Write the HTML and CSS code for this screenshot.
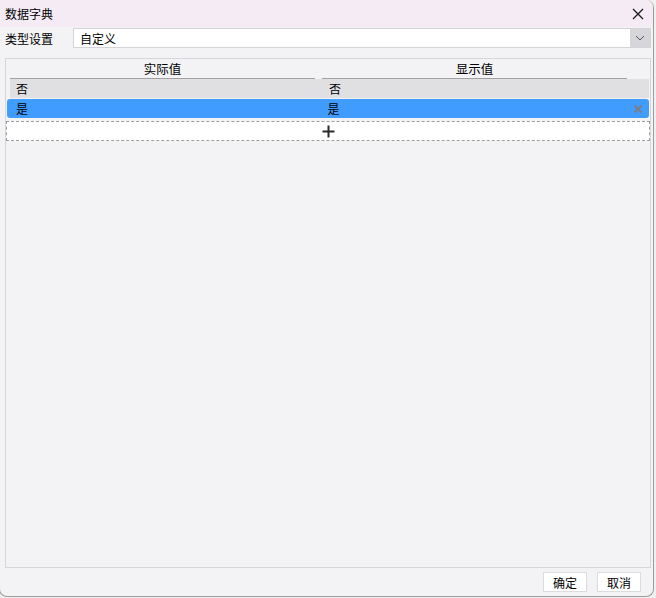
FILE: index.html
```html
<!DOCTYPE html>
<html>
<head>
  <meta charset="utf-8">
  <link rel="stylesheet" href="styles.css">
</head>
<body>
  <div class="window">
    <div class="titlebar">
      <span class="title">数据字典</span>
      <span class="close">
        <svg width="12" height="12" viewBox="0 0 12 12"><path d="M1 1L11 11M11 1L1 11" stroke="#1a1a1a" stroke-width="1.3"/></svg>
      </span>
    </div>

    <div class="type-row">
      <label>类型设置</label>
      <div class="select">
        <span class="select-value">自定义</span>
        <span class="select-btn">
          <svg width="10" height="6" viewBox="0 0 10 6"><path d="M1 1L5 5L9 1" fill="none" stroke="#555" stroke-width="1"/></svg>
        </span>
      </div>
    </div>

    <div class="panel">
      <div class="table-head">
        <div class="th">实际值</div>
        <div class="th">显示值</div>
      </div>
      <div class="row row-gray">
        <div class="td">否</div>
        <div class="td">否</div>
        <div class="td-del"></div>
      </div>
      <div class="row row-sel">
        <div class="td">是</div>
        <div class="td">是</div>
        <div class="td-del">
          <svg width="10" height="10" viewBox="0 0 10 10"><path d="M1.5 1.5L8.5 8.5M8.5 1.5L1.5 8.5" stroke="#7d7d85" stroke-width="2"/></svg>
        </div>
      </div>
      <div class="add-row">
        <svg width="13" height="13" viewBox="0 0 13 13"><path d="M6.5 0.5V12.5M0.5 6.5H12.5" stroke="#2b2b2b" stroke-width="2"/></svg>
      </div>
    </div>

    <div class="footer">
      <button class="btn">确定</button>
      <button class="btn">取消</button>
    </div>
  </div>
</body>
</html>
```

FILE: styles.css
```css
body {
  margin: 0;
  background: #f0f0f0;
  font-family: 'Noto Sans CJK SC', 'Noto Sans', sans-serif;
  font-size: 12px;
  color: #000;
}

.window {
  box-sizing: border-box;
  width: 655px;
  height: 597px;
  margin-left: -1px;
  background: #f3f3f5;
  border: 1px solid #9c9c9c;
  border-top: none;
  border-radius: 0 8px 8px 8px;
  display: flex;
  flex-direction: column;
  overflow: hidden;
}

.titlebar {
  height: 27px;
  background: #f5ebf5;
  display: flex;
  align-items: center;
  justify-content: space-between;
  padding: 0 9px 0 5px;
}

.close {
  display: flex;
  width: 12px;
  height: 12px;
}

.type-row {
  display: flex;
  align-items: center;
  height: 20px;
  margin-top: 1px;
  padding-left: 5px;
  padding-right: 2px;
}

.type-row label {
  width: 68px;
}

.select {
  flex: 1;
  height: 20px;
  box-sizing: border-box;
  background: #fff;
  border: 1px solid #d4d4d8;
  display: flex;
  align-items: center;
}

.select-value {
  flex: 1;
  padding-left: 6px;
}

.select-btn {
  width: 20px;
  height: 18px;
  background: #d6d6da;
  display: flex;
  align-items: center;
  justify-content: center;
}

.panel {
  flex: 1;
  margin: 10px 2px 0 5px;
  border: 1px solid #d6d6da;
  padding: 0;
  display: flex;
  flex-direction: column;
}

.table-head {
  display: flex;
  height: 20px;
  padding-left: 4px;
}

.th {
  width: 305px;
  margin-right: 7px;
  border-bottom: 1px solid #a2a2a2;
  text-align: center;
  font-size: 12.5px;
  line-height: 20px;
}

.row {
  display: flex;
  height: 19px;
  align-items: center;
  margin-right: 1px;
}

.row-gray {
  background: #e0e0e3;
  margin-left: 4px;
}

.row-sel {
  background: #409cff;
  margin-top: 1px;
  margin-left: 1px;
  border-radius: 3px;
}

.td {
  box-sizing: border-box;
  width: 312px;
  padding-left: 5px;
  line-height: 19px;
}

.td:first-child {
  width: 317px;
  padding-left: 9px;
}

.row-gray .td:first-child {
  width: 314px;
  padding-left: 6px;
}

.td-del {
  flex: 1;
  display: flex;
  justify-content: flex-end;
  padding-right: 6px;
}

.add-row {
  height: 18px;
  margin-top: 3px;
  background: #fff;
  border: 1px dashed #9e9e9e;
  display: flex;
  align-items: center;
  justify-content: center;
}

.footer {
  height: 28px;
  display: flex;
  justify-content: flex-end;
  align-items: center;
  gap: 10px;
  padding-right: 12px;
}

.btn {
  width: 44px;
  height: 20px;
  padding: 0;
  background: #fff;
  border: 1px solid #dcdcdc;
  font-family: inherit;
  font-size: 12px;
  color: #000;
}
```
